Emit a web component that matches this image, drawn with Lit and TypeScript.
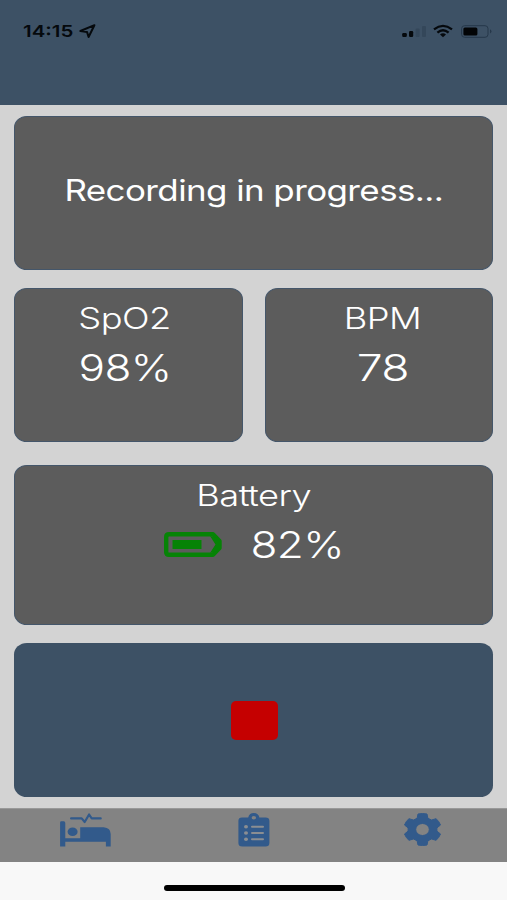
import { LitElement, html, css } from "lit";
import { customElement, property } from "lit/decorators.js";

@customElement("status-bar")
class StatusBar extends LitElement {
  static styles = css`
    :host { display: block; height: 105px; background: #3d5165; }
    .bar { display: flex; justify-content: space-between; padding: 21px 15px 0 23px; height: 20px; align-items: center; }
    .left, .right { display: flex; align-items: center; }
    .time { width: 50px; font: 600 16.5px/20px Inter, sans-serif; color: #05090d; white-space: nowrap; }
    .time span { display: inline-block; transform: scaleX(1.24); transform-origin: 0 50%; }
    svg { display: block; }
    .arrow { margin-left: 5px; }
  `;
  render() {
    return html`<div class="bar">
      <div class="left">
        <div class="time"><span>14:15</span></div>
        <svg class="arrow" width="20" height="16" viewBox="0 0 20 16">
          <path d="M16.4 2.2 L2.4 8 L9 8.9 L10.6 14 Z" fill="none" stroke="#05090d" stroke-width="2" stroke-linejoin="round" />
        </svg>
      </div>
      <div class="right">
        <svg width="90" height="20" viewBox="0 0 90 20">
          <rect x="0.2" y="12" width="4.6" height="4" rx="1.2" fill="#05090d" />
          <rect x="7" y="10" width="4.2" height="6" rx="1.2" fill="#05090d" />
          <rect x="13.6" y="7.6" width="4" height="8.4" rx="1" fill="#34475a" />
          <rect x="20" y="5" width="4" height="11" rx="1" fill="#34475a" />
          <g fill="none" stroke="#05090d" stroke-width="2.3">
            <path d="M32 8.3 Q41 1.4 50 8.3" />
            <path d="M35.4 11.6 Q41 7 46.6 11.6" />
          </g>
          <path d="M38 13.4 Q41 11.3 44 13.4 L41 16.2 Z" fill="#05090d" />
          <rect x="59.6" y="4.7" width="26.4" height="11.6" rx="3" fill="none" stroke="#26384a" stroke-width="1" />
          <rect x="61.4" y="6.4" width="14" height="8.2" rx="1.5" fill="#020406" />
          <path d="M88 8.2 Q91 10.4 88 12.6 Z" fill="#26384a" />
        </svg>
      </div>
    </div>`;
  }
}

@customElement("metric-card")
class MetricCard extends LitElement {
  @property() label = "";
  @property() value = "";
  @property({ type: Boolean }) battery = false;
  static styles = css`
    :host { display: block; box-sizing: border-box; background: #5c5c5c; border: 1px solid #44566a; border-radius: 13px / 11.5px; color: #fff; font-family: Inter, sans-serif; text-align: center; padding-top: 10px; }
    .label { font-size: 29.5px; font-weight: 360; line-height: 38px; height: 38px; letter-spacing: -0.45px; }
    .row { display: flex; justify-content: center; align-items: center; height: 60px; font-size: 37px; font-weight: 340; letter-spacing: -0.5px; }
    .label span, .value { display: inline-block; white-space: nowrap; }
    .label span { transform: scaleX(1.23); }
    .value { transform: scaleX(var(--value-stretch, 1.19)); }
    .battery { margin-right: 36px; margin-left: -6px; }
  `;
  render() {
    return html`<div class="label"><span>${this.label}</span></div>
      <div class="row">
        ${this.battery
          ? html`<svg class="battery" width="58" height="25" viewBox="0 0 58 25">
              <path d="M5 2.2 H49 L55.5 9 V16 L49 22.8 H5 Q2.2 22.8 2.2 20 V5 Q2.2 2.2 5 2.2 Z" fill="none" stroke="#068306" stroke-width="4.4" stroke-linejoin="round" />
              <path d="M46 4 L51.5 12.5 L46 21 L54 19 V6 Z" fill="#068306" />
              <rect x="8.5" y="8" width="29" height="9" fill="#068306" />
            </svg>`
          : ""}
        <span class="value">${this.value}</span>
      </div>`;
  }
}

@customElement("app-root")
class AppRoot extends LitElement {
  static styles = css`
    :host { display: flex; flex-direction: column; width: 507px; height: 900px; overflow: hidden; background: #d3d3d3; font-family: Inter, sans-serif; }
    main { flex: none; height: 703px; box-sizing: border-box; padding: 11px 14px 0; display: flex; flex-direction: column; }
    .status { height: 154px; box-sizing: border-box; display: flex; align-items: center; justify-content: center; background: #5c5c5c; border: 1px solid #44566a; border-radius: 13px / 11.5px; color: #fff; font-size: 29.5px; font-weight: 370; letter-spacing: -0.5px; }
    .status span { white-space: nowrap; transform: scaleX(1.185); margin-top: -7px; }
    .pair { display: grid; grid-template-columns: 229px 228px; justify-content: space-between; margin-top: 18px; height: 154px; }
    .oxygen { padding-right: 7px; }
    .pulse { padding-left: 7px; --value-stretch: 1.25; }
    .power { margin-top: 23px; height: 160px; }
    .stop { margin-top: 18px; height: 154px; border: 0; padding: 0 0 0 1px; background: #3d5165; border-radius: 13px / 11.5px; display: flex; align-items: center; justify-content: center; }
    .square { width: 47px; height: 39px; border-radius: 5px; background: #c50000; }
    nav { height: 54px; box-sizing: border-box; background: #838383; display: grid; grid-template-columns: repeat(3, 1fr); justify-items: center; border-top: 1px solid #989898; padding-top: 3px; }
    nav svg { display: block; }
    .home { flex: 1; background: #f8f8f8; display: flex; justify-content: center; padding: 23px 0 0 1px; }
    .home i { width: 181px; height: 6px; border-radius: 3px; background: #000; }
  `;
  render() {
    return html`<status-bar></status-bar>
      <main>
        <section class="status"><span>Recording in progress...</span></section>
        <div class="pair">
          <metric-card class="oxygen" label="SpO2" value="98%"></metric-card>
          <metric-card class="pulse" label="BPM" value="78"></metric-card>
        </div>
        <metric-card class="power" label="Battery" value="82%" battery></metric-card>
        <button class="stop" aria-label="Stop"><div class="square"></div></button>
      </main>
      <nav>
        <svg width="52" height="36" viewBox="-0.7 0 52 36" fill="#325a8b">
          <path d="M1.6 9.3 H4 Q5.6 9.3 5.6 11 V26.2 H20.5 V15.2 H44 Q51 16 51 22 V34.5 H46.2 V29.7 H5.6 V34.5 H0.4 V10.5 Q0.4 9.3 1.6 9.3 Z" />
          <ellipse cx="12.9" cy="19.8" rx="5" ry="4.3" />
          <path d="M11.4 6.4 H22 L25 10 L29.4 2.5 L32 6.4 H41" fill="none" stroke="#325a8b" stroke-width="2.2" stroke-linecap="round" stroke-linejoin="round" />
        </svg>
        <svg width="32" height="36" viewBox="0 0 32 36" fill="#325a8b">
          <path fill-rule="evenodd" d="M4 5.4 H10.2 Q11.3 1 15.8 1 Q20.3 1 21.4 5.4 H27.5 Q31.4 5.4 31.4 8.8 V31 Q31.4 34.5 27.5 34.5 H4.3 Q.4 34.5 .4 31 V8.8 Q.4 5.4 4 5.4 Z M15.8 3.9 A2.2 1.8 0 1 0 15.8 7.5 A2.2 1.8 0 1 0 15.8 3.9 Z" />
          <g fill="#8b8e92"><ellipse cx="8" cy="14.8" rx="2" ry="1.7" /><ellipse cx="8" cy="21" rx="2" ry="1.7" /><ellipse cx="8" cy="27.2" rx="2" ry="1.7" />
          <rect x="13" y="13.8" width="13" height="2" rx="1" /><rect x="13" y="20" width="13" height="2" rx="1" /><rect x="13" y="26.2" width="13" height="2" rx="1" /></g>
        </svg>
        <svg width="38" height="36" viewBox="0.5 0 38 36" fill="#325a8b">
          <path fill-rule="evenodd" stroke="#325a8b" stroke-width="1" stroke-linejoin="round" d="M14.5 2 Q19 1 23.5 2 L24.4 6.3 L28 8 L32.6 6.7 Q35.7 9.5 37 13 L33.4 15.9 V19.1 L37 22 Q35.7 25.5 32.6 28.3 L28 27 L24.4 28.8 L23.5 33 Q19 34 14.5 33 L13.6 28.8 L10 27 L5.4 28.3 Q2.3 25.5 1 22 L4.6 19.1 V15.9 L1 13 Q2.3 9.5 5.4 6.7 L10 8 L13.6 6.3 Z M19 11.5 A6.8 6 0 1 0 19 23.5 A6.8 6 0 1 0 19 11.5 Z" />
        </svg>
      </nav>
      <div class="home"><i></i></div>`;
  }
}
